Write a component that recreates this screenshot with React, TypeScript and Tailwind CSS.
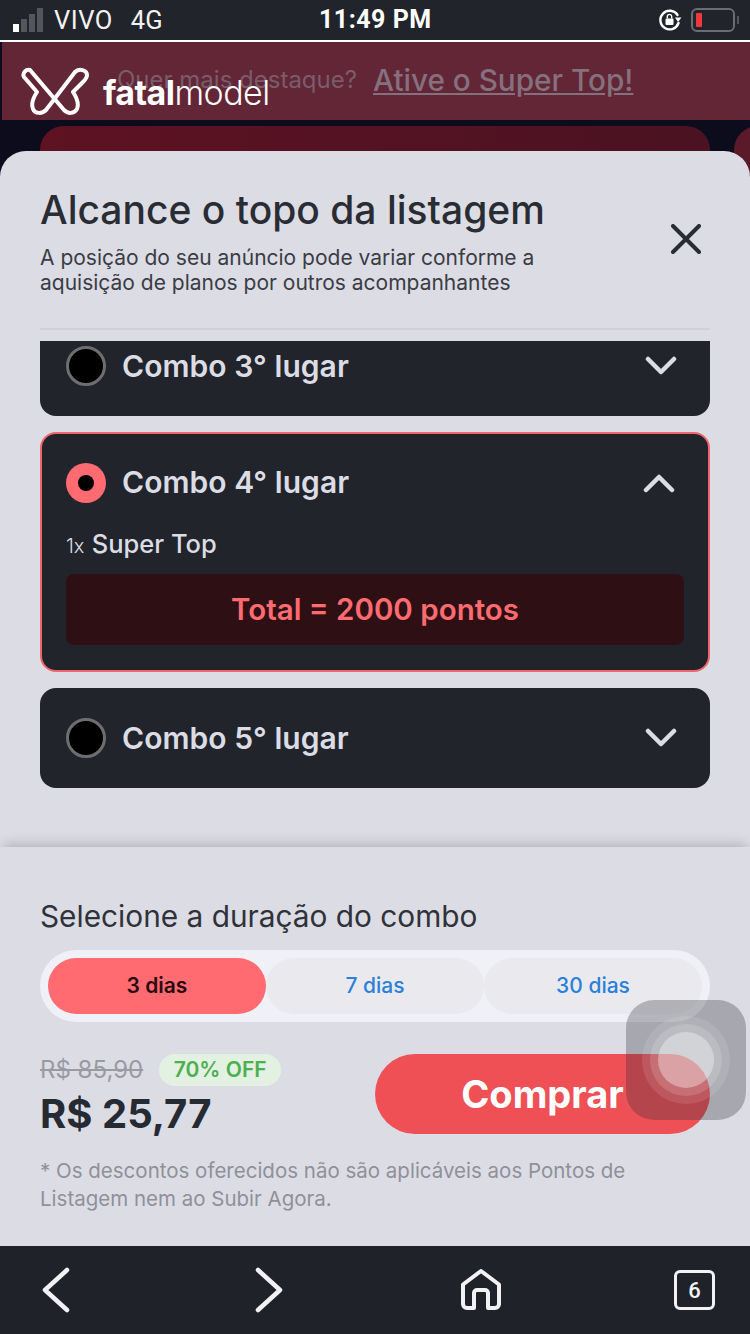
const FONT = 'font-["Inter",sans-serif]'

function Chevron({ up }: { up?: boolean }) {
  return (
    <svg width="32" height="20" viewBox="0 0 32 20" fill="none" stroke="#dcdde4" strokeWidth="4.5" strokeLinecap="round" strokeLinejoin="round">
      <path d={up ? 'M3 17 16 4l13 13' : 'M3 3l13 13L29 3'} />
    </svg>
  )
}

function Radio({ selected }: { selected?: boolean }) {
  if (selected) {
    return (
      <span className="flex h-10 w-10 items-center justify-center rounded-full bg-[#ff6b70]">
        <span className="h-4 w-4 rounded-full bg-black" />
      </span>
    )
  }
  return <span className="h-10 w-10 rounded-full border-[3px] border-[#6e6e70] bg-black" />
}

function ComboRow({ label, selected }: { label: string; selected?: boolean }) {
  return (
    <div className="flex items-center pl-[26px] pr-[33px]">
      <Radio selected={selected} />
      <span className="ml-4 text-[30px] font-semibold tracking-[0.05px] text-[#dcdde4]">{label}</span>
      <span className="ml-auto"><Chevron up={selected} /></span>
    </div>
  )
}

function Logo() {
  return (
    <div className="absolute left-[21px] top-[25px] flex items-center">
      <svg width="68" height="48" viewBox="0 0 68 48" fill="none" stroke="#fff" strokeWidth="4" strokeLinejoin="round">
        <path d="M9 3C5 2 1 6 3 10L16 25C12 31 10 37 12 42 14 47 21 47 25 43L54 5C58 1 66 3 66 8 66 11 64 13 62 15L52 25C56 31 58 37 56 42 53 47 47 47 43 43Z" />
      </svg>
      <span className="ml-[14px] mt-[3px] text-[34px] leading-none tracking-[-0.55px] text-white">
        <span className="font-bold">fatal</span><span className="font-light">model</span>
      </span>
    </div>
  )
}

function StatusBar() {
  return (
    <div className="relative flex h-10 items-center bg-[#22242c] pl-[13px] pr-[11px] font-['Roboto',sans-serif] text-white">
      <div className="flex items-end gap-[2px]">
        <span className="h-[8px] w-[6px] bg-white" />
        <span className="h-[13px] w-[6px] bg-[#55565c]" />
        <span className="h-[18px] w-[6px] bg-[#55565c]" />
        <span className="h-[24px] w-[6px] bg-[#55565c]" />
      </div>
      <span className="ml-[11px] text-[25.5px] tracking-[0.5px] text-[#f2f2f2]">VIVO</span>
      <span className="ml-[18px] text-[25.5px] text-[#f2f2f2]">4G</span>
      <span className="absolute left-[319px] text-[25px] font-bold tracking-[0.5px]">11:49 PM</span>
      <div className="ml-auto flex items-center">
        <svg width="24" height="24" viewBox="0 0 24 24" fill="none">
          <path d="M19.5 7A9.3 9.3 0 1 0 20.5 15" stroke="#fff" strokeWidth="2.4" strokeLinecap="round" />
          <path d="M17 9.5h6.5L20 14Z" fill="#fff" />
          <rect x="7.5" y="10.5" width="8" height="6.5" rx="1" fill="#fff" />
          <path d="M9.3 10.5V8.6a2.2 2.2 0 0 1 4.4 0v1.9" stroke="#fff" strokeWidth="1.4" />
        </svg>
        <div className="ml-[9px] flex h-[24px] w-[44px] items-center rounded-[6px] border-2 border-[#6c6d72] pl-[3px]">
          <span className="h-[14px] w-[6px] rounded-[1px] bg-[#f0383c]" />
        </div>
        <span className="ml-[2px] h-[8px] w-[2px] bg-[#55565c]" />
      </div>
    </div>
  )
}

function BottomNav() {
  return (
    <div className="flex h-[88px] shrink-0 items-center bg-[#20222a] pl-[41px] pr-[35px] text-[#f2f2f4]">
      <svg width="30" height="46" viewBox="0 0 30 46" fill="none" stroke="currentColor" strokeWidth="4.5" strokeLinecap="round" strokeLinejoin="round">
        <path d="M26 3 4 23l22 20" />
      </svg>
      <svg className="ml-[183px]" width="30" height="46" viewBox="0 0 30 46" fill="none" stroke="currentColor" strokeWidth="4.5" strokeLinecap="round" strokeLinejoin="round">
        <path d="M4 3l22 20L4 43" />
      </svg>
      <svg className="ml-[176px]" width="42" height="42" viewBox="0 0 42 42" fill="none" stroke="currentColor" strokeWidth="4" strokeLinejoin="round">
        <path d="M3 15.5 21 2l18 13.5V35a4 4 0 0 1-4 4h-7V24a3 3 0 0 0-3-3h-8a3 3 0 0 0-3 3v15H7a4 4 0 0 1-4-4Z" />
      </svg>
      <div className="ml-auto flex h-[40px] w-[41px] items-center justify-center rounded-[6px] border-[3px] border-[#f2f2f4] font-['Roboto',sans-serif] text-[22px] font-medium">
        6
      </div>
    </div>
  )
}

function DurationPicker() {
  return (
    <div className="mt-[17px] flex rounded-full bg-[#f0f1f6] p-2">
      <div className="flex h-14 flex-1 items-center justify-center rounded-full bg-[#ff6b70] text-[21px] font-semibold text-[#2a0c10]">3 dias</div>
      <div className="flex h-14 flex-1 items-center justify-center rounded-full bg-[#eaeaee] text-[21px] font-medium text-[#2a7fd8]">7 dias</div>
      <div className="flex h-14 flex-1 items-center justify-center rounded-full bg-[#eaeaee] text-[21px] font-medium text-[#2a7fd8]">30 dias</div>
    </div>
  )
}

export default function App() {
  return (
    <div className={`relative flex h-[1334px] w-[750px] flex-col overflow-hidden bg-[#22242c] ${FONT}`}>
      <StatusBar />
      <div className="h-[2px] bg-white" />

      <div className="relative flex-1 overflow-hidden bg-[#0c0c1c] pl-[2px]">
        <div className="flex h-[78px] items-center bg-[#632636] pl-[115px] pb-[2px]">
          <span className="text-[24px] text-[#7a5c6a]">Quer mais destaque?</span>
          <span className="ml-[16px] text-[29.7px] font-medium text-[#85707e] underline">Ative o Super Top!</span>
        </div>
        <div className="ml-[38px] mt-[6px] h-[60px] w-[670px] rounded-[24px] bg-gradient-to-r from-[#5e1222] to-[#4a1222]" />
        <div className="absolute right-[-40px] top-[84px] h-[60px] w-[56px] rounded-[24px] bg-[#5a1a2a]" />
        <Logo />

        <div className="absolute inset-x-0 bottom-0 top-[109px] flex flex-col overflow-hidden rounded-t-[26px] bg-[#dcdde4]">
          <div className="relative h-[177px] shrink-0 px-10 pt-[36px]">
            <h1 className="text-[39px] font-medium leading-[46px] text-[#2a2c34]">Alcance o topo da listagem</h1>
            <p className="mt-[12px] text-[21px] leading-[25px] text-[#3a3c44]">
              A posição do seu anúncio pode variar conforme a
              <br />
              aquisição de planos por outros acompanhantes
            </p>
            <svg className="absolute right-[49px] top-[73px]" width="30" height="30" viewBox="0 0 30 30" fill="none" stroke="#2a2c34" strokeWidth="4" strokeLinecap="round">
              <path d="M2 2l26 26M28 2 2 28" />
            </svg>
          </div>
          <div className="mx-10 h-[2px] shrink-0 bg-[#d0d2da]" />

          <div className="mt-[11px] flex flex-1 flex-col gap-4 overflow-hidden px-10">
            <div className="-mt-[25px] flex h-[100px] shrink-0 items-center rounded-[16px] bg-[#22242c]">
              <div className="w-full"><ComboRow label="Combo 3° lugar" /></div>
            </div>
            <div className="flex h-[240px] shrink-0 flex-col rounded-[16px] border-2 border-[#f0646c] bg-[#22242c] pt-[26px]">
              <div className="-ml-[2px]"><ComboRow label="Combo 4° lugar" selected /></div>
              <div className="mt-[20px] pl-6 text-[25.5px] leading-[38px] text-[#dcdde4]">
                <span className="text-[20px] font-light">1x</span> <span className="font-medium">Super Top</span>
              </div>
              <div className="mx-6 mt-[9px] flex h-[71px] items-center justify-center rounded-[8px] bg-[#2e1014] text-[29.5px] font-semibold text-[#ff6b70]">
                Total = 2000 pontos
              </div>
            </div>
            <div className="flex h-[100px] shrink-0 items-center rounded-[16px] bg-[#22242c]">
              <div className="w-full"><ComboRow label="Combo 5° lugar" /></div>
            </div>
          </div>

          <div className="relative h-[399px] shrink-0 bg-[#dcdde4] px-10 pt-[52px] shadow-[0_-6px_12px_-4px_rgba(0,0,0,0.22)]">
            <h2 className="text-[29.8px] leading-[34px] text-[#30323a]">Selecione a duração do combo</h2>
            <DurationPicker />
            <div className="mt-8 flex">
              <div>
                <div className="flex h-8 items-center">
                  <span className="text-[24px] leading-8 text-[#9a9ba2] line-through">R$ 85,90</span>
                  <span className="ml-[16px] flex h-8 w-[122px] items-center justify-center rounded-full bg-[#e3f1e3] text-[21px] font-semibold text-[#4caf50]">70% OFF</span>
                </div>
                <div className="mt-[3px] text-[40px] font-bold leading-[50px] text-[#252a33]">R$ 25,77</div>
              </div>
              <button className="ml-auto flex h-20 w-[335px] items-center justify-center rounded-full bg-[#ee5056] text-[38px] font-bold text-white">Comprar</button>
            </div>
            <p className="mt-[18px] text-[20.5px] leading-[28px] text-[#8f9099]">
              * Os descontos oferecidos não são aplicáveis aos Pontos de
              <br />
              Listagem nem ao Subir Agora.
            </p>
          </div>
        </div>
      </div>

      <BottomNav />

      {/* assistive touch */}
      <div className="absolute left-[626px] top-[1000px] flex h-[120px] w-[120px] items-center justify-center rounded-[28px] bg-[#303036]/30">
        <div className="flex h-[88px] w-[88px] items-center justify-center rounded-full bg-white/10">
          <div className="flex h-[72px] w-[72px] items-center justify-center rounded-full bg-white/15">
            <div className="h-[56px] w-[56px] rounded-full bg-white/35" />
          </div>
        </div>
      </div>
    </div>
  )
}
